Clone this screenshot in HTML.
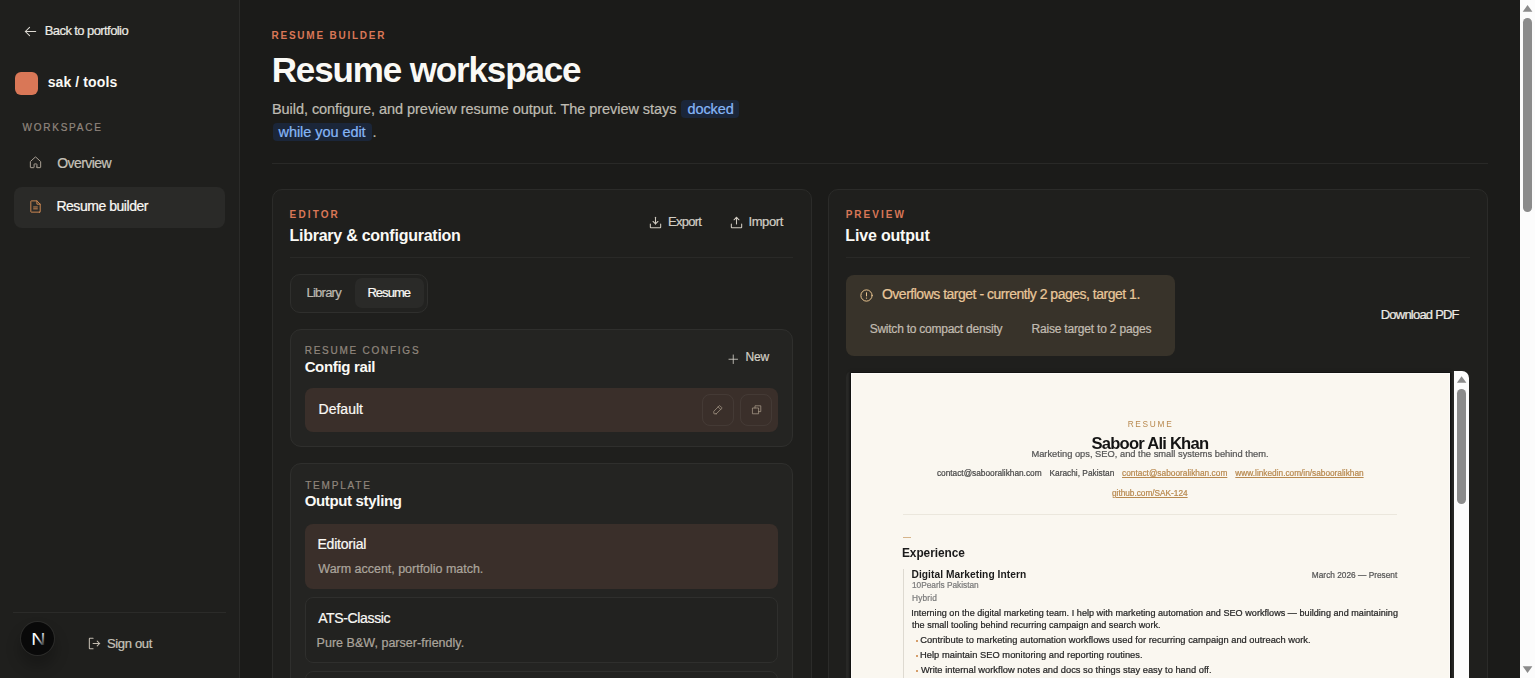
<!DOCTYPE html>
<html lang="en">
<head>
<meta charset="utf-8">
<title>Resume workspace</title>
<style>
:root{
  --bg:#1b1b19; --side:#1f1f1d; --card:#1f1f1d; --inner:#242422; --line:#2b2b29; --line2:#2f2f2d;
  --active:#2a2a28; --sel:#3a2f2a; --acc:#d97757;
}
html,body{margin:0;padding:0}
body{width:1535px;height:678px;overflow:hidden;position:relative;background:var(--bg);
  font-family:"Liberation Sans",sans-serif;color:#faf9f5;}
.t{position:absolute;white-space:nowrap;line-height:1;-webkit-text-stroke:.22px currentColor;}
.b{position:absolute;box-sizing:border-box;}
svg.i{position:absolute;fill:none;stroke-linecap:round;stroke-linejoin:round;overflow:visible}
/* sidebar */
.side-bg{left:0;top:0;width:240px;height:678px;background:var(--side);border-right:1px solid var(--line);}
.logo{left:15px;top:72px;width:22.6px;height:22.6px;border-radius:6px;background:var(--acc);}
.nav-active{left:14.2px;top:186.5px;width:211px;height:41px;border-radius:8px;background:var(--active);}
.side-rule{left:13.3px;top:611.5px;width:212.6px;height:1px;background:var(--line);}
.avatar{left:21.3px;top:622.2px;width:33.2px;height:33.2px;border-radius:50%;background:#090909;
  box-shadow:0 0 0 1px #2c2c2a, 0 10px 14px 2px rgba(0,0,0,.22);}
/* header */
.head-rule{left:272px;top:163.3px;width:1216px;height:1px;background:#292927;}
.chip{background:#1b2639;border-radius:4px;}
/* cards */
.card{background:var(--card);border:1px solid var(--line);border-radius:10px;}
.rule{height:1px;background:#292927;}
.tabs{left:290px;top:274px;width:138px;height:38.8px;border:1px solid var(--line2);border-radius:10px;background:#222220;}
.tab-on{left:355.3px;top:278px;width:68.6px;height:30.4px;border-radius:7px;background:#2a2a28;}
.inner{background:var(--inner);border:1px solid var(--line2);border-radius:11px;}
.row-sel{background:var(--sel);border-radius:8px;}
.row{border:1px solid var(--line2);border-radius:8px;background:#222220;}
.ibtn{border:1px solid rgba(255,255,255,.055);border-radius:8px;}
.alert{left:846px;top:274.5px;width:329px;height:81.7px;border-radius:8px;background:#38332a;}
/* preview frame */
.frame{left:846px;top:370.5px;width:623.4px;height:320px;background:#292927;border-radius:6px 7px 0 0;overflow:hidden;}
.paper{left:851px;top:373px;width:599px;height:320px;background:#faf7f0;overflow:hidden;
  box-shadow:0 0 2.5px .6px rgba(0,0,0,.85), inset 0 0 0 .5px #ffffff;}
.paper .t{filter:blur(.25px);}
.iscroll{left:1454px;top:370.8px;width:15.3px;height:320px;background:#fcfcfc;border-radius:0 7px 0 0;}
.thumb{background:#8b8b8b;border-radius:5px;}
.pscroll{left:1520px;top:0;width:15px;height:678px;background:#fcfcfc;}
</style>
</head>
<body>

<aside>
  <div class="b side-bg"></div>
  <a>
    <svg class="i" style="left:22.9px;top:24.4px" width="15" height="15" viewBox="0 0 256 256" stroke="#dddad3" stroke-width="18"><line x1="216" y1="128" x2="40" y2="128"/><polyline points="112 56 40 128 112 200"/></svg>
    <span class="t" style="left:44.76px;top:24.00px;font-size:13px;font-weight:400;letter-spacing:-0.584px;color:#eceae4;">Back to portfolio</span>
  </a>
  <div class="b logo"></div>
  <span class="t" style="left:47.68px;top:75.05px;font-size:14px;font-weight:700;letter-spacing:0.105px;color:#faf9f5;-webkit-text-stroke:0;">sak / tools</span>
  <span class="t" style="left:22.53px;top:122.73px;font-size:10px;font-weight:400;letter-spacing:1.765px;color:#90867d;">WORKSPACE</span>
  <nav>
    <svg class="i" style="left:28.05px;top:155.4px" width="15" height="15" viewBox="0 0 256 256" stroke="#aaa196" stroke-width="17"><path d="M152,208V160a8,8,0,0,0-8-8H112a8,8,0,0,0-8,8v48a8,8,0,0,1-8,8H48a8,8,0,0,1-8-8V115.500a8.300,8.300,0,0,1,2.600-5.900l80-72.700a8,8,0,0,1,10.800,0l80,72.700a8.300,8.300,0,0,1,2.600,5.900V208a8,8,0,0,1-8,8H160A8,8,0,0,1,152,208Z"/></svg>
    <span class="t" style="left:57.16px;top:155.75px;font-size:14px;font-weight:400;letter-spacing:-0.562px;color:#c6c2b9;">Overview</span>
    <div class="b nav-active"></div>
    <svg class="i" style="left:28.0px;top:199.0px" width="15" height="15" viewBox="0 0 256 256" stroke="#cc8852" stroke-width="17"><path d="M200,224H56a8,8,0,0,1-8-8V40a8,8,0,0,1,8-8h96l56,56V216A8,8,0,0,1,200,224Z"/><polyline points="152 32 152 88 208 88"/><line x1="96" y1="136" x2="160" y2="136"/><line x1="96" y1="168" x2="160" y2="168"/></svg>
    <span class="t" style="left:56.38px;top:199.25px;font-size:14px;font-weight:400;letter-spacing:-0.455px;color:#faf9f5;">Resume builder</span>
  </nav>
  <div class="b side-rule"></div>
  <div class="b avatar">
    <svg width="35" height="35" viewBox="0 0 35 35" style="position:absolute;left:-0.9px;top:-0.9px">
      <defs><linearGradient id="ng" x1="0" y1="0" x2="1" y2="1"><stop offset="0.42" stop-color="#fff"/><stop offset="0.88" stop-color="#fff" stop-opacity="0.05"/></linearGradient></defs>
      <text x="18.3" y="24.3" text-anchor="middle" font-family="Liberation Sans, sans-serif" font-size="16.4" fill="url(#ng)" transform="translate(18.3 0) scale(1.2 1) translate(-18.3 0)">N</text>
    </svg>
  </div>
  <svg class="i" style="left:86.7px;top:636.1px" width="15" height="15" viewBox="0 0 256 256" stroke="#c3bcb1" stroke-width="18"><polyline points="174 86 216 128 174 170"/><line x1="104" y1="128" x2="216" y2="128"/><path d="M104,216H48a8,8,0,0,1-8-8V48a8,8,0,0,1,8-8h56"/></svg>
  <span class="t" style="left:106.95px;top:637.10px;font-size:13px;font-weight:400;letter-spacing:-0.327px;color:#c6c2b9;">Sign out</span>
</aside>

<main>
  <header>
    <span class="t" style="left:271.47px;top:30.83px;font-size:10px;font-weight:700;letter-spacing:1.767px;color:#d97757;-webkit-text-stroke:0;">RESUME BUILDER</span>
    <h1 style="margin:0;font:inherit"><span class="t" style="left:271.71px;top:52.37px;font-size:35px;font-weight:700;letter-spacing:-1.133px;color:#faf9f5;-webkit-text-stroke:0;">Resume workspace</span></h1>
    <p style="margin:0">
      <span class="t" style="left:271.93px;top:101.73px;font-size:14.5px;font-weight:400;letter-spacing:-0.049px;color:#bfbbb2;">Build, configure, and preview resume output. The preview stays</span>
      <span class="b chip" style="left:681.2px;top:100.2px;width:58.2px;height:18px"></span><span class="t" style="left:687.39px;top:101.73px;font-size:14.5px;font-weight:400;letter-spacing:-0.061px;color:#86b6f6;">docked</span>
      <span class="b chip" style="left:272.6px;top:123.2px;width:99px;height:18.2px"></span><span class="t" style="left:278.54px;top:124.63px;font-size:14.5px;font-weight:400;letter-spacing:-0.057px;color:#86b6f6;">while you edit</span><span class="t" style="left:372.60px;top:124.63px;font-size:14.5px;font-weight:400;letter-spacing:0.000px;color:#bfbbb2;">.</span>
    </p>
    <div class="b head-rule"></div>
  </header>

  <section>
    <div class="b card" style="left:272px;top:188.6px;width:539.6px;height:520px"></div>
    <span class="t" style="left:289.61px;top:209.53px;font-size:10px;font-weight:700;letter-spacing:2.119px;color:#d97757;-webkit-text-stroke:0;">EDITOR</span>
    <h2 style="margin:0;font:inherit"><span class="t" style="left:289.49px;top:228.06px;font-size:16px;font-weight:700;letter-spacing:-0.250px;color:#faf9f5;-webkit-text-stroke:0;">Library &amp; configuration</span></h2>
    <svg class="i" style="left:647.8px;top:214.85px" width="15" height="15" viewBox="0 0 256 256" stroke="#d0cbc1" stroke-width="18"><polyline points="86 110 128 152 170 110"/><line x1="128" y1="40" x2="128" y2="152"/><path d="M216,152v56a8,8,0,0,1-8,8H48a8,8,0,0,1-8-8V152"/></svg>
    <span class="t" style="left:668.11px;top:215.00px;font-size:13px;font-weight:400;letter-spacing:-0.762px;color:#d2cec5;">Export</span>
    <svg class="i" style="left:728.6px;top:214.85px" width="15" height="15" viewBox="0 0 256 256" stroke="#d0cbc1" stroke-width="18"><polyline points="86 82 128 40 170 82"/><line x1="128" y1="152" x2="128" y2="40"/><path d="M216,152v56a8,8,0,0,1-8,8H48a8,8,0,0,1-8-8V152"/></svg>
    <span class="t" style="left:748.46px;top:215.00px;font-size:13px;font-weight:400;letter-spacing:-0.387px;color:#d2cec5;">Import</span>
    <div class="b rule" style="left:290px;top:257.3px;width:503.3px"></div>

    <div class="b tabs"></div>
    <div class="b tab-on"></div>
    <span class="t" style="left:306.43px;top:286.30px;font-size:13px;font-weight:400;letter-spacing:-0.741px;color:#bdb9b0;">Library</span><span class="t" style="left:367.45px;top:286.30px;font-size:13px;font-weight:400;letter-spacing:-0.968px;color:#faf9f5;">Resume</span>

    <div class="b inner" style="left:290.2px;top:328.7px;width:502.4px;height:118.5px"></div>
    <span class="t" style="left:304.66px;top:345.64px;font-size:10px;font-weight:400;letter-spacing:1.753px;color:#90867d;">RESUME CONFIGS</span>
    <h3 style="margin:0;font:inherit"><span class="t" style="left:304.64px;top:359.00px;font-size:15px;font-weight:700;letter-spacing:-0.337px;color:#faf9f5;-webkit-text-stroke:0;">Config rail</span></h3>
    <svg class="i" style="left:727.3px;top:352.65px" width="12.5" height="12.5" viewBox="0 0 256 256" stroke="#dcd8cf" stroke-width="16"><line x1="40" y1="128" x2="216" y2="128"/><line x1="128" y1="40" x2="128" y2="216"/></svg>
    <span class="t" style="left:745.49px;top:351.14px;font-size:12px;font-weight:400;letter-spacing:-0.119px;color:#d2cec5;">New</span>
    <div class="b row-sel" style="left:305px;top:387.8px;width:473.2px;height:44.4px"></div>
    <span class="t" style="left:318.50px;top:402.15px;font-size:14px;font-weight:400;letter-spacing:0.016px;color:#faf9f5;">Default</span>
    <div class="b ibtn" style="left:701.9px;top:393.9px;width:31.8px;height:32px"></div>
    <svg class="i" style="left:712.3px;top:404.1px" width="11.6" height="11.6" viewBox="0 0 256 256" stroke="#ad9f8e" stroke-width="16"><path d="M92.700,216H48a8,8,0,0,1-8-8V163.300a7.900,7.900,0,0,1,2.300-5.600l120-120a8,8,0,0,1,11.300,0l44.700,44.700a8,8,0,0,1,0,11.300l-120,120A7.900,7.900,0,0,1,92.700,216Z"/><line x1="136" y1="64" x2="192" y2="120"/></svg>
    <div class="b ibtn" style="left:740.2px;top:393.9px;width:32.2px;height:32px"></div>
    <svg class="i" style="left:750.9px;top:404.1px" width="11.6" height="11.6" viewBox="0 0 256 256" stroke="#ad9f8e" stroke-width="16"><polyline points="168 168 216 168 216 40 88 40 88 88"/><rect x="40" y="88" width="128" height="128"/></svg>

    <div class="b inner" style="left:290.2px;top:463.3px;width:502.4px;height:260px"></div>
    <span class="t" style="left:305.20px;top:480.64px;font-size:10px;font-weight:400;letter-spacing:1.804px;color:#90867d;">TEMPLATE</span>
    <h3 style="margin:0;font:inherit"><span class="t" style="left:304.64px;top:492.90px;font-size:15px;font-weight:700;letter-spacing:-0.332px;color:#faf9f5;-webkit-text-stroke:0;">Output styling</span></h3>
    <div class="b row-sel" style="left:305px;top:523.9px;width:473.2px;height:65px"></div>
    <span class="t" style="left:317.43px;top:537.15px;font-size:14px;font-weight:400;letter-spacing:-0.198px;color:#faf9f5;">Editorial</span><span class="t" style="left:318.33px;top:562.62px;font-size:12.5px;font-weight:400;letter-spacing:-0.020px;color:#aba59c;">Warm accent, portfolio match.</span>
    <div class="b row" style="left:305px;top:597.4px;width:473.2px;height:65.2px"></div>
    <span class="t" style="left:318.14px;top:610.65px;font-size:14px;font-weight:400;letter-spacing:-0.347px;color:#faf9f5;">ATS-Classic</span><span class="t" style="left:316.58px;top:636.72px;font-size:12.5px;font-weight:400;letter-spacing:0.023px;color:#aba59c;">Pure B&amp;W, parser-friendly.</span>
    <div class="b row" style="left:305px;top:670.6px;width:473.2px;height:65.2px"></div>
  </section>

  <section>
    <div class="b card" style="left:828px;top:188.6px;width:659.6px;height:520px"></div>
    <span class="t" style="left:845.65px;top:209.53px;font-size:10px;font-weight:700;letter-spacing:2.019px;color:#d97757;-webkit-text-stroke:0;">PREVIEW</span>
    <h2 style="margin:0;font:inherit"><span class="t" style="left:845.36px;top:228.06px;font-size:16px;font-weight:700;letter-spacing:-0.178px;color:#faf9f5;-webkit-text-stroke:0;">Live output</span></h2>
    <div class="b rule" style="left:846px;top:257.3px;width:623.8px"></div>
    <div class="b alert"></div>
    <svg color="#e9c48f" class="i" style="left:858.9px;top:287.7px" width="15" height="15" viewBox="0 0 256 256" stroke="#e9c48f" stroke-width="17"><circle cx="128" cy="128" r="96"/><line x1="128" y1="80" x2="128" y2="136"/><circle cx="128" cy="172" r="11" fill="currentColor" stroke="none"/></svg>
    <span class="t" style="left:881.94px;top:287.35px;font-size:14px;font-weight:400;letter-spacing:-0.490px;color:#e9c79a;">Overflows target - currently 2 pages, target 1.</span><span class="t" style="left:869.66px;top:322.64px;font-size:12px;font-weight:400;letter-spacing:-0.240px;color:#c2bcb1;">Switch to compact density</span><span class="t" style="left:1031.49px;top:322.64px;font-size:12px;font-weight:400;letter-spacing:-0.189px;color:#c2bcb1;">Raise target to 2 pages</span>
    <span class="t" style="left:1380.76px;top:307.80px;font-size:13px;font-weight:400;letter-spacing:-0.783px;color:#edebe5;">Download PDF</span>

    <div class="b frame"></div>
    <article class="b paper">
      <span class="t" style="left:276.63px;top:46.97px;font-size:8.3px;font-weight:400;letter-spacing:1.713px;color:#b8894f;-webkit-text-stroke:0;">RESUME</span>
      <span class="t" style="left:240.50px;top:63.05px;font-size:16.6px;font-weight:700;letter-spacing:-0.781px;color:#141414;-webkit-text-stroke:0;">Saboor Ali Khan</span>
      <span class="t" style="left:180.41px;top:76.73px;font-size:9.3px;font-weight:400;letter-spacing:0.010px;color:#555555;">Marketing ops, SEO, and the small systems behind them.</span>
      <span class="t" style="left:85.94px;top:95.67px;font-size:8.3px;font-weight:400;letter-spacing:-0.007px;color:#4a4a4a;">contact@sabooralikhan.com</span><span class="t" style="left:198.50px;top:95.67px;font-size:8.3px;font-weight:400;letter-spacing:0.014px;color:#4a4a4a;">Karachi, Pakistan</span><span class="t" style="left:271.00px;top:95.67px;font-size:8.3px;font-weight:400;letter-spacing:0.020px;color:#b8894f;text-decoration:underline;text-underline-offset:1px;">contact@sabooralikhan.com</span><span class="t" style="left:384.32px;top:95.67px;font-size:8.3px;font-weight:400;letter-spacing:-0.012px;color:#b8894f;text-decoration:underline;text-underline-offset:1px;">www.linkedin.com/in/sabooralikhan</span>
      <span class="t" style="left:261.00px;top:115.97px;font-size:8.3px;font-weight:400;letter-spacing:-0.028px;color:#b8894f;text-decoration:underline;text-underline-offset:1px;">github.com/SAK-124</span>
      <div class="b" style="left:52px;top:140.8px;width:494px;height:1px;background:#ebe7dd"></div>
      <div class="b" style="left:51.8px;top:163.8px;width:8.2px;height:1px;background:#d6b48a"></div>
      <span class="t" style="left:50.97px;top:174.83px;font-size:11.9px;font-weight:700;letter-spacing:-0.051px;color:#1b1b1b;-webkit-text-stroke:0;">Experience</span>
      <div class="b" style="left:51.9px;top:196px;width:1.2px;height:200px;background:#dedad1"></div>
      <span class="t" style="left:60.48px;top:196.57px;font-size:10.2px;font-weight:700;letter-spacing:0.067px;color:#1b1b1b;-webkit-text-stroke:0;">Digital Marketing Intern</span><span class="t" style="left:460.84px;top:197.57px;font-size:8.3px;font-weight:400;letter-spacing:0.007px;color:#555555;">March 2026 — Present</span>
      <span class="t" style="left:61.00px;top:208.27px;font-size:8.3px;font-weight:400;letter-spacing:-0.015px;color:#7a7a7a;">10Pearls Pakistan</span>
      <span class="t" style="left:61.00px;top:220.97px;font-size:8.3px;font-weight:400;letter-spacing:0.165px;color:#7a7a7a;">Hybrid</span>
      <span class="t" style="left:60.24px;top:235.84px;font-size:9.05px;font-weight:400;letter-spacing:0.038px;color:#262626;">Interning on the digital marketing team. I help with marketing automation and SEO workflows — building and maintaining</span><span class="t" style="left:60.90px;top:247.54px;font-size:9.05px;font-weight:400;letter-spacing:0.038px;color:#262626;">the small tooling behind recurring campaign and search work.</span>
      <span class="b" style="left:64.6px;top:266.6px;width:2px;height:2px;border-radius:50%;background:#c9803f"></span><span class="t" style="left:69.36px;top:262.52px;font-size:9.31px;font-weight:400;letter-spacing:0.018px;color:#262626;">Contribute to marketing automation workflows used for recurring campaign and outreach work.</span>
      <span class="b" style="left:64.6px;top:281.8px;width:2px;height:2px;border-radius:50%;background:#c9803f"></span><span class="t" style="left:69.05px;top:277.72px;font-size:9.31px;font-weight:400;letter-spacing:0.037px;color:#262626;">Help maintain SEO monitoring and reporting routines.</span>
      <span class="b" style="left:64.6px;top:297px;width:2px;height:2px;border-radius:50%;background:#c9803f"></span><span class="t" style="left:69.95px;top:292.92px;font-size:9.31px;font-weight:400;letter-spacing:0.015px;color:#262626;">Write internal workflow notes and docs so things stay easy to hand off.</span>
    </article>
    <div class="b iscroll">
      <svg style="position:absolute;left:0;top:0" width="15.3" height="20" viewBox="0 0 15.3 20"><path d="M7.6 5.3 L12.4 11.8 L2.9 11.8 Z" fill="#8b8b8b"/></svg>
      <div class="b thumb" style="left:3.2px;top:18.5px;width:8.7px;height:115px"></div>
    </div>
  </section>
</main>

<div class="b pscroll">
  <svg style="position:absolute;left:0;top:0" width="15" height="20" viewBox="0 0 15 20"><path d="M7.55 5 L12.4 11.8 L2.7 11.8 Z" fill="#8b8b8b"/></svg>
  <div class="b thumb" style="left:3.2px;top:18.2px;width:8.9px;height:194.2px"></div>
  <svg style="position:absolute;left:0;top:658px" width="15" height="20" viewBox="0 0 15 20"><path d="M7.55 15 L12.4 8.2 L2.7 8.2 Z" fill="#8b8b8b"/></svg>
</div>

</body>
</html>
